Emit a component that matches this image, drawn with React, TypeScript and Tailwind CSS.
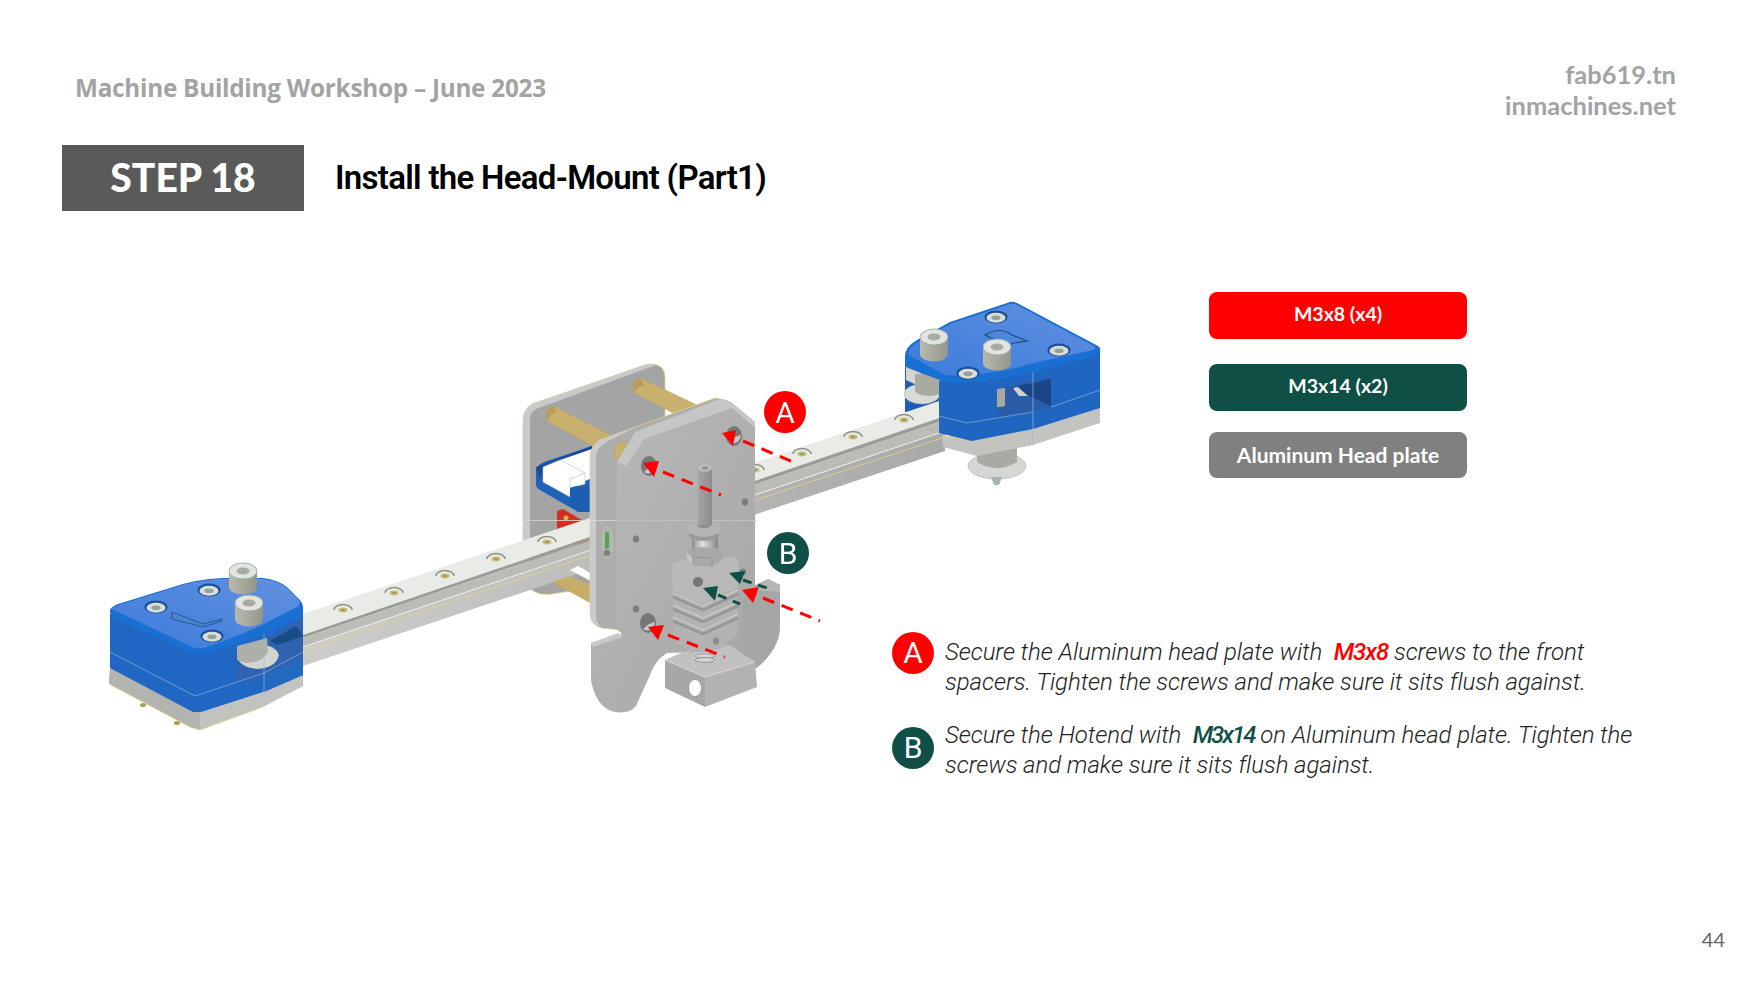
type Pt = [number, number]

const pts = (list: Pt[]) => list.map((p) => p.join(',')).join(' ')

// rail edges, left end and right end
const railBack: Pt[] = [[297, 616], [945, 399]]
const railFace: Pt[] = [[297, 637], [945, 416]]
const railDark: Pt[] = [[297, 640], [945, 420]]
const railWhite: Pt[] = [[297, 649], [945, 431]]
const railYellow: Pt[] = [[297, 653], [945, 437]]
const railBottom: Pt[] = [[297, 668], [945, 451]]

const railHoles: Pt[] = [[343, 609], [394, 592], [445, 575], [496, 558], [547, 541], [802, 453], [853, 436], [904, 419], [755, 469]]

function Band({ a, b, fill }: { a: Pt[]; b: Pt[]; fill: string }) {
  return <polygon points={pts([a[0], a[1], b[1], b[0]])} fill={fill} />
}

function RailHole({ x, y }: { x: number; y: number }) {
  return (
    <g>
      <path d={`M${x - 9} ${y + 1} A9 5.5 0 0 1 ${x + 9} ${y + 1}`} fill="none" stroke="#8f908a" strokeWidth="1.5" />
      <ellipse cx={x} cy={y + 1} rx="4.5" ry="2.4" fill="#c9bd6c" />
      <ellipse cx={x} cy={y + 1} rx="2" ry="1" fill="#8f8f78" />
    </g>
  )
}

function Bolt({ x, y, h = 17 }: { x: number; y: number; h?: number }) {
  return (
    <g>
      <path d={`M${x - 14} ${y} V${y + h} A14 7.5 0 0 0 ${x + 14} ${y + h} V${y} Z`} fill="url(#boltSide)" />
      <ellipse cx={x} cy={y} rx="14" ry="8" fill="#e2e5df" stroke="#8aa79c" strokeWidth="0.8" />
      <ellipse cx={x} cy={y} rx="6.5" ry="3.4" fill="#a6aba4" />
    </g>
  )
}

function CapScrew({ x, y }: { x: number; y: number }) {
  return (
    <g>
      <ellipse cx={x} cy={y} rx="11.5" ry="6.5" fill="#174f9f" />
      <ellipse cx={x} cy={y + 0.8} rx="9.5" ry="5" fill="#d9ddd5" />
      <ellipse cx={x} cy={y + 0.8} rx="4.5" ry="2.3" fill="#92a29c" />
    </g>
  )
}

function Hole({ x, y, rx = 8, ry = 10 }: { x: number; y: number; rx?: number; ry?: number }) {
  return (
    <g>
      <ellipse cx={x} cy={y} rx={rx} ry={ry} fill="#777" />
      <path d={`M${x - rx + 3} ${y + ry - 4} A${rx} ${ry} 0 0 0 ${x + rx - 1} ${y - 1} L${x + 1} ${y + 1} Z`} fill="#c9c9c9" />
    </g>
  )
}

function Dot({ x, y }: { x: number; y: number }) {
  return <ellipse cx={x} cy={y} rx="3.2" ry="3.6" fill="#7d7d7d" />
}

function Arrow({ tip, tail, color, line }: { tip: Pt[]; tail: [Pt, Pt]; color: string; line: string }) {
  return (
    <g>
      <line x1={tail[0][0]} y1={tail[0][1]} x2={tail[1][0]} y2={tail[1][1]} stroke={color} strokeWidth="3" strokeDasharray={line} />
      <polygon points={pts(tip)} fill={color} />
    </g>
  )
}

function LeftBlock() {
  return (
    <g>
      <ellipse cx="143" cy="705" rx="3" ry="2" fill="#a7a15c" />
      <ellipse cx="177" cy="723" rx="3" ry="2" fill="#a7a15c" />
      <polygon points="110,668 109,684 190,727 200,730 263,707 303,686 303,668" fill="#c2c3bf" />
      <polygon points="109,684 190,727 200,730 200,713 110,668" fill="#b3b4b0" />
      <polyline points="109,684 190,727 200,730 263,707" fill="none" stroke="#e2d787" strokeWidth="0.8" />
      <path d="M110 614 V668 L193 712 H201 L263 692 L303 675 V612 L265 632 L200 654 Z" fill="#1f67c3" />
      <polygon points="264,632 303,612 303,675 264,692" fill="#2269c1" />
      {/* slot with the pulley in it */}
      <polygon points="237,655 264,640 303,617 303,660 265,674 238,683" fill="#2f62b0" />
      <polygon points="270,641 296,626 303,636 278,645" fill="#174d86" />
      <path d="M237 656 Q239 667 257 669 Q276 668 279 655 Q275 645 262 645 L237 652 Z" fill="#d3d5cf" />
      <path d="M237 646 L267 638 L268 652 Q262 663 245 663 L237 660 Z" fill="#aeafa8" />
      <polyline points="110,652 195,696 264,673 303,652" fill="none" stroke="#8fb4d9" strokeWidth="0.7" />
      <line x1="264" y1="630" x2="264" y2="705" stroke="#9dbad8" strokeWidth="0.7" />
      <path d="M110 610 Q111 607 118 604 L170 588 Q195 579 223 578 H263 Q278 580 287 587 L300 600 Q303 604 303 607 V617 L265 634 Q235 646 200 655 Q195 655 190 653 L113 617 Q110 615 110 612 Z" fill="#1a6fd3" />
      <path d="M112 609 Q113 607 119 605 L170 589 Q195 580 223 579 H263 Q278 581 287 588 L298 599 Q302 603 297 607 L262 625 Q230 640 203 648 Q197 649 192 647 Z" fill="url(#blueTop)" />
      <polygon points="172,612 203,624 222,619 222,621 203,627 172,619" fill="#4f83d4" stroke="#174f78" strokeWidth="0.8" />
      <CapScrew x={156} y={607} />
      <CapScrew x={209} y={590} />
      <CapScrew x={212} y={636} />
      <Bolt x={243} y={571} h={16} />
      <Bolt x={249} y={603} h={16} />
    </g>
  )
}

function RightBlock() {
  return (
    <g>
      {/* lower screw under the base */}
      <ellipse cx="997" cy="466" rx="29" ry="13" fill="#d5d8d2" stroke="#9cb1a8" strokeWidth="0.6" />
      <path d="M991 477 H1002 L999 485 H994 Z" fill="#a7b5ae" />
      <path d="M977 445 H1017 V462 Q997 474 977 462 Z" fill="#a9aaa3" />
      <polygon points="942,436 943,447 977,456 1033,445 1100,423 1100,405 1033,425 977,436" fill="#c3c4c0" />
      <polyline points="942,436 977,440 1033,427 1100,405" fill="none" stroke="#e2d787" strokeWidth="0.8" />
      <path d="M939 381 V433 L972 441 L1033 429 L1100 408 V348 L1033 368 L977 378 H945 Z" fill="#1e66c0" />
      <polygon points="997,389 1051,378 1051,407 1033,412 997,418" fill="#2b5ca8" />
      <polygon points="1011,388 1051,379 1051,406 1030,396" fill="#1a4688" />
      <polygon points="997,389 1005,388 1005,406 1001,407 997,407" fill="#a8a8a0" />
      <polygon points="1013,388 1018,387 1028,396 1019,396" fill="#cfd2cb" />
      <polyline points="939,416 967,423 997,418 1033,412" fill="none" stroke="#8fb4d9" strokeWidth="0.7" />
      <polyline points="1051,407 1100,390" fill="none" stroke="#8fb4d9" strokeWidth="0.7" />
      <line x1="1033" y1="368" x2="1033" y2="446" stroke="#9dbad8" strokeWidth="0.7" />
      <path d="M905 356 Q905 347 917 340 L950 322 L1010 302 Q1013 301 1017 303 L1098 346 Q1101 348 1100 352 Q1100 354 1096 356 L1033 372 Q1000 380 977 381 Q960 384 945 382 L908 368 Q905 366 905 362 Z" fill="#1a6fd3" />
      <path d="M908 355 Q908 348 918 342 L950 324 L1010 304 Q1013 303 1017 305 L1094 346 Q1097 348 1093 350 L1033 363 Q1000 373 977 374 Q960 377 945 375 Z" fill="url(#blueTop)" />
      <path d="M985 335 Q1000 326 1012 335 L1027 341 L1014 343 Q1003 348 995 340 Z" fill="none" stroke="#1b4f84" strokeWidth="1.2" />
      <CapScrew x={996} y={317} />
      <CapScrew x={1059} y={350} />
      <CapScrew x={968} y={373} />
      <Bolt x={934} y={337} h={17} />
      <Bolt x={997} y={347} h={16} />
    </g>
  )
}

function Assembly() {
  return (
    <svg viewBox="100 292 1010 460" className="h-[460px] w-[1010px] shrink-0 blur-[0.3px]">
      <defs>
        <linearGradient id="boltSide" x1="0" y1="0" x2="1" y2="0">
          <stop offset="0" stopColor="#b9b9ae" />
          <stop offset="1" stopColor="#94958b" />
        </linearGradient>
        <linearGradient id="blueTop" x1="0" y1="1" x2="1" y2="0">
          <stop offset="0" stopColor="#3c7cdb" />
          <stop offset="1" stopColor="#6190e0" />
        </linearGradient>
        <linearGradient id="railSide" x1="0" y1="0" x2="1" y2="0">
          <stop offset="0" stopColor="#cdcdcb" />
          <stop offset="1" stopColor="#a9a9a7" />
        </linearGradient>
        <linearGradient id="plateFace" x1="0" y1="0" x2="1" y2="1">
          <stop offset="0" stopColor="#b9b9b9" />
          <stop offset="1" stopColor="#a6a6a6" />
        </linearGradient>
        <linearGradient id="silver" x1="0" y1="0" x2="1" y2="0">
          <stop offset="0" stopColor="#8d8d8d" />
          <stop offset="0.4" stopColor="#e0e0e0" />
          <stop offset="1" stopColor="#858585" />
        </linearGradient>
        <linearGradient id="tube" x1="0" y1="0" x2="1" y2="0">
          <stop offset="0" stopColor="#a4a4a4" />
          <stop offset="1" stopColor="#8d8d8d" />
        </linearGradient>
      </defs>

      {/* right pulley sits behind the rail */}
      <path d="M905 362 L940 380 V412 H905 Z" fill="#1d5eb4" />
      <polygon points="906,366 940,382 940,396 906,380" fill="#d4d5cf" />
      <ellipse cx="922" cy="394" rx="18" ry="10" fill="#d9dbd6" stroke="#9cb1a8" strokeWidth="0.5" />
      <path d="M915 374 H940 V394 Q926 399 915 392 Z" fill="#a8a9a1" />

      {/* back plate */}
      <path d="M523 420 Q523 410 532 404 L645 365 Q655 362 662 368 Q665 372 665 378 V470 H640 V580 L552 594 Q540 596 532 590 L523 578 Z" fill="#a4a4a4" stroke="#e3d47f" strokeWidth="0.7" />
      <path d="M523 420 Q523 410 532 404 L645 365 Q651 363 656 365 L536 409 Q530 412 530 420 V586 L523 578 Z" fill="#c9c9c9" />
      <polygon points="547,409 553,406 612,436 595,447 547,421" fill="#c9b06f" stroke="#bfa75f" strokeWidth="0.5" />
      <polygon points="547,409 553,406 557,412 551,414 547,421" fill="#b79c5a" />
      <polygon points="633,383 640,378 697,405 673,413 633,392" fill="#c9b06f" stroke="#bfa75f" strokeWidth="0.5" />
      <polygon points="633,383 640,378 644,385 638,388 633,392" fill="#b79c5a" />

      {/* carriage */}
      <path d="M536 470 Q537 465 544 462 L592 446 V512 H578 L540 490 Q536 488 536 484 Z" fill="#1f63b8" />
      <polygon points="536,467 592,446 592,450 544,468 540,480" fill="#1c4a92" />
      <polygon points="560,460 592,449 592,478 578,484 570,487" fill="#ffffff" />
      <polygon points="543,467 560,460 585,473 585,484 570,488 570,497 543,482" fill="#ffffff" stroke="#bdbdbd" strokeWidth="0.6" />
      <polyline points="570,479 585,473" fill="none" stroke="#bdbdbd" strokeWidth="0.6" />
      <line x1="570" y1="479" x2="570" y2="488" stroke="#bdbdbd" strokeWidth="0.6" />
      <path d="M570 488 Q578 484 592 488 V512 H578 L570 504 Z" fill="#1b5eb2" />
      <path d="M550 497 V505 L590 527 V512 H578 Z" fill="#a4a4a4" />
      <polygon points="557,511 563,509 592,526 592,550 586,550 557,530" fill="#d92c20" />
      <circle cx="566" cy="518" r="2.5" fill="#d9b34e" />
      <circle cx="587" cy="531" r="2.5" fill="#d9b34e" />

      {/* rail */}
      <Band a={railBack} b={railFace} fill="#e9ebe6" />
      <Band a={railFace} b={railDark} fill="#9b9c95" />
      <Band a={railDark} b={railWhite} fill="#bcbcb7" />
      <Band a={railWhite} b={railBottom} fill="url(#railSide)" />
      <line x1={railWhite[0][0]} y1={railWhite[0][1]} x2={railWhite[1][0]} y2={railWhite[1][1]} stroke="#eeeef0" strokeWidth="1" />
      <line x1={railYellow[0][0]} y1={railYellow[0][1]} x2={railYellow[1][0]} y2={railYellow[1][1]} stroke="#e3d47f" strokeWidth="0.8" />
      {railHoles.map(([x, y]) => (
        <RailHole key={x} x={x} y={y} />
      ))}

      {/* lower spacers */}
      <polygon points="552,582 590,603 600,603 600,590 570,576" fill="#c8ad6a" />
      <polygon points="570,570 600,586 600,578 578,566" fill="#ffffff" />

      {/* middle plate */}
      <path d="M590 458 Q590 446 600 440 L715 398 L725 400 V500 L620 630 L602 628 Q590 625 590 612 Z" fill="#adadad" stroke="#e3d47f" strokeWidth="0.7" />
      <path d="M590 458 Q590 446 600 440 L640 425 L606 442 Q596 448 596 458 V620 L600 627 Q590 625 590 612 Z" fill="#cbcbcb" />
      <polygon points="615,445 626,441 626,454 615,459" fill="#c9b06f" stroke="#bfa75f" strokeWidth="0.5" />
      <rect x="603" y="527" width="9" height="30" rx="4.5" fill="#b1b1b1" stroke="#d9cd82" strokeWidth="0.7" />
      <rect x="605" y="532" width="4" height="17" rx="2" fill="#4fa55a" />
      <ellipse cx="607" cy="553" rx="3.5" ry="3" fill="#808080" />
      <line x1="522" y1="520.5" x2="756" y2="520.5" stroke="#d9d9d9" strokeWidth="0.8" />

      {/* bracket behind the hotend */}
      <path d="M745 590 L768 579 L780 585 V630 Q778 650 757 668 L700 660 Z" fill="#a6a6a6" />
      <polygon points="768,579 780,585 780,592 754,590" fill="#b5b5b5" />

      {/* front plate */}
      <path d="M617 462 L635 432 L717 400 Q725 398 732 403 L755 422 V590 L742 600 V650 L667 653 Q655 660 650 675 L636 706 Q630 714 615 712 Q596 708 591 680 V643 L622 634 L616 628 Z" fill="url(#plateFace)" />
      <path d="M617 462 L635 432 L717 400 Q725 398 732 403 L755 422 V428 L732 408 L644 439 L626 466 Z" fill="#c6c6c6" />
      <polygon points="591,643 618,633 623,637 592,647" fill="#c9c9c9" />
      <line x1="616" y1="520.5" x2="756" y2="520.5" stroke="#c4c4c4" strokeWidth="0.8" />
      <Hole x={649} y={466} />
      <Hole x={734} y={436} />
      <Hole x={648} y={623} />
      <Dot x={745} y={502} />
      <Dot x={636} y={539} />
      <Dot x={636} y={609} />
      <Dot x={743} y={572} />

      {/* heater block */}
      <polygon points="665,660 683,652 730,645 755,662 705,677" fill="#c1c1c1" />
      <polygon points="665,660 705,677 705,707 665,688" fill="#a7a7a7" />
      <polygon points="705,677 755,662 757,687 705,707" fill="#b2b2b2" />
      <polyline points="665,660 705,677 755,662" fill="none" stroke="#e6dcdc" strokeWidth="0.7" />
      <ellipse cx="695" cy="688" rx="6.5" ry="8.5" fill="#ffffff" stroke="#8a8a8a" strokeWidth="0.7" />
      <rect x="695" y="648" width="20" height="12" fill="#d4d4d4" />
      <ellipse cx="705" cy="656" rx="10" ry="2.4" fill="none" stroke="#8a8a8a" strokeWidth="0.9" />
      <ellipse cx="705" cy="660" rx="10" ry="2.4" fill="#d4d4d4" stroke="#8a8a8a" strokeWidth="0.9" />

      {/* hotend tube */}
      <rect x="698" y="468" width="14" height="58" fill="url(#tube)" />
      <ellipse cx="705" cy="468" rx="7" ry="3.8" fill="#bcbcbc" />
      <ellipse cx="705" cy="468" rx="3" ry="1.6" fill="#8b8b8b" />
      <rect x="692" y="534" width="26" height="18" fill="url(#silver)" />
      <ellipse cx="704" cy="535" rx="15" ry="6" fill="#9a9a9a" />
      <ellipse cx="704" cy="528" rx="17" ry="9" fill="#b5b5b5" />
      <ellipse cx="704" cy="525" rx="7" ry="3.2" fill="#8f8f8f" />
      <rect x="698" y="516" width="14" height="9" fill="url(#tube)" />

      {/* heat sink */}
      <path d="M672 566 Q672 562 685 560 L735 557 Q738 558 738 562 V634 L722 648 Q705 654 690 652 L673 640 Z" fill="#b2b2b2" />
      <path d="M672 566 Q672 562 685 560 L735 557 Q738 558 738 562 V586 L703 604 L673 590 Z" fill="#b9b9b9" />
      {[592, 604, 616].map((y) => (
        <g key={y}>
          <polyline points={`673,${y + 5} 703,${y + 18} 738,${y + 2}`} fill="none" stroke="#969696" strokeWidth="2.5" />
          <polyline points={`673,${y + 1} 703,${y + 14} 738,${y - 2}`} fill="none" stroke="#c6c6c6" strokeWidth="1.5" />
        </g>
      ))}
      <polygon points="687,552 700,547 722,549 722,560 712,567 692,565 687,558" fill="#a8a8a8" />
      <polygon points="687,552 692,557 692,565 687,558" fill="#c6c6c6" />
      <line x1="692" y1="557" x2="712" y2="558" stroke="#8f8f8f" strokeWidth="0.8" />
      <line x1="712" y1="558" x2="712" y2="567" stroke="#8f8f8f" strokeWidth="0.8" />
      <ellipse cx="698" cy="582" rx="5" ry="5" fill="#777" />
      <ellipse cx="716" cy="641" rx="3" ry="3.5" fill="#8a8a8a" />

      {/* dashed arrows */}
      <Arrow color="#ff0000" line="12 8" tail={[[743, 441], [798, 464]]} tip={[[722, 433], [736, 430], [733, 446]]} />
      <Arrow color="#ff0000" line="12 8" tail={[[663, 472], [721, 495]]} tip={[[643, 463], [659, 461], [654, 477]]} />
      <Arrow color="#ff0000" line="12 8" tail={[[763, 598], [820, 621]]} tip={[[742, 590], [759, 587], [753, 603]]} />
      <Arrow color="#ff0000" line="12 8" tail={[[668, 635], [725, 657]]} tip={[[648, 627], [664, 625], [658, 640]]} />
      <Arrow color="#0f4f45" line="9 7" tail={[[743, 580], [767, 588]]} tip={[[729, 573], [745, 571], [740, 584]]} />
      <Arrow color="#0f4f45" line="9 7" tail={[[718, 595], [740, 604]]} tip={[[703, 588], [718, 586], [715, 601]]} />

      <LeftBlock />
      <RightBlock />

      <circle cx="785" cy="412" r="21" fill="#ff0000" />
      <text x="785" y="423" textAnchor="middle" className="fill-white font-['Roboto'] text-[30px]">A</text>
      <circle cx="788" cy="553" r="21" fill="#0f4f45" />
      <text x="788" y="564" textAnchor="middle" className="fill-white font-['Roboto'] text-[30px]">B</text>
    </svg>
  )
}

function PartTag({ label, className }: { label: string; className: string }) {
  return (
    <div className={`flex w-[258px] items-center justify-center rounded-lg font-bold text-white ${className}`}>
      {label}
    </div>
  )
}

function Badge({ letter, className }: { letter: string; className: string }) {
  return (
    <div className={`flex h-[42px] w-[42px] shrink-0 items-center justify-center rounded-full font-['Roboto'] text-[30px] font-normal not-italic text-white ${className}`}>
      {letter}
    </div>
  )
}

export default function App() {
  return (
    <div className="flex h-[990px] w-[1754px] flex-col overflow-hidden bg-white font-['Lato',sans-serif]">
      <header className="flex items-start justify-between pl-[75px] pr-[78px] pt-[59px]">
        <div className="mt-[13px] font-['Open_Sans',sans-serif] text-[24.3px] font-bold leading-[32px] tracking-[-0.25px] text-[#a3a3a3]">
          Machine Building Workshop – June 2023
        </div>
        <div className="text-right text-[25.5px] font-bold leading-[31px] text-[#a3a3a3]">
          <div>fab619.tn</div>
          <div>inmachines.net</div>
        </div>
      </header>

      <div className="ml-[62px] mt-[24px] flex items-center gap-[31px]">
        <div className="flex h-[66px] w-[242px] items-center justify-center bg-[#5a5a5a] pb-[2px] text-[39px] font-black text-white">
          STEP 18
        </div>
        <h1 className="font-['Roboto',sans-serif] text-[33px] font-semibold tracking-[-0.7px] text-black">Install the Head-Mount (Part1)</h1>
      </div>

      <main className="ml-[100px] mt-[81px] flex">
        <Assembly />
        <div className="-ml-[220px] flex flex-col">
          <div className="ml-[319px] flex flex-col">
            <PartTag label="M3x8 (x4)" className="h-[47px] bg-[#ff0000] pb-[3px] text-[19.5px]" />
            <PartTag label="M3x14 (x2)" className="mt-[25px] h-[47px] bg-[#0f4f45] pb-[3px] text-[19.5px]" />
            <PartTag label="Aluminum Head plate" className="mt-[21px] h-[46px] bg-[#808080] text-[21px]" />
          </div>
          <div className="ml-[2px] mt-[154px] flex flex-col font-['Roboto',sans-serif] text-[24px] font-light italic leading-[29.5px] tracking-[-0.07px] text-[#222]">
            <div className="flex gap-[11px]">
              <Badge letter="A" className="bg-[#ff0000]" />
              <p className="mt-[6px] whitespace-nowrap">
                Secure the Aluminum head plate with &nbsp;<span className="font-medium tracking-[-1px] text-[#ff0000]">M3x8</span> screws to the front
                <br />
                spacers. Tighten the screws and make sure it sits flush against.
              </p>
            </div>
            <div className="mt-[24px] flex gap-[11px]">
              <Badge letter="B" className="mt-[6px] bg-[#0f4f45]" />
              <p className="whitespace-nowrap">
                Secure the Hotend with &nbsp;<span className="font-medium tracking-[-2px] text-[#0f4f45]">M3x14</span> on Aluminum head plate. Tighten the
                <br />
                screws and make sure it sits flush against.
              </p>
            </div>
          </div>
        </div>
      </main>

      <footer className="mt-[147px] flex justify-end pr-[29px] text-[20px] leading-6 text-[#666]">44</footer>
    </div>
  )
}
